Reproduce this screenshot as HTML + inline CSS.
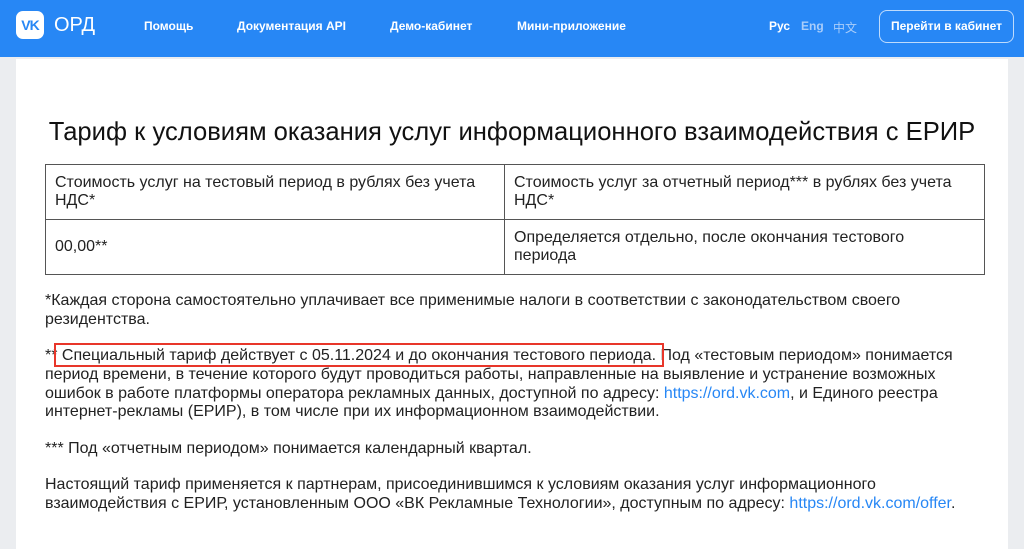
<!DOCTYPE html>
<html><head><meta charset="utf-8"><style>
*{margin:0;padding:0;box-sizing:border-box}
body{width:1024px;height:541px;overflow:hidden;background:#ebedf0;font-family:"Liberation Sans","Noto Sans CJK SC",sans-serif;color:#222}
.hdr{height:57px;background:#2787f5;position:relative;color:#fff}
.logo{position:absolute;left:16px;top:11px;width:28px;height:28px;background:#fff;border-radius:7px;color:#2787f5;font-weight:bold;font-size:14px;text-align:center;line-height:28px;letter-spacing:-1px}
.ord{position:absolute;left:54px;top:14px;font-size:20px}
.nav{position:absolute;top:19px;font-size:12px;font-weight:bold}
.lang{position:absolute;top:19px;font-size:12px;font-weight:bold}
.btn{position:absolute;left:879px;top:10px;width:135px;height:33px;border:1px solid rgba(255,255,255,.7);border-radius:8px;font-size:12px;font-weight:bold;text-align:center;line-height:31px}
.card{position:absolute;left:16px;top:59px;width:992px;height:490px;background:#fff}
h1{position:absolute;left:0;width:1024px;top:118px;text-align:center;font-size:25.6px;font-weight:normal;color:#111;white-space:nowrap}
table{position:absolute;left:45px;top:164px;width:940px;border-collapse:collapse;font-size:16px;table-layout:fixed}
td{border:1px solid #555;padding:0 9px;vertical-align:middle;line-height:18px;white-space:nowrap}
.p{position:absolute;left:45px;width:960px;font-size:16px;line-height:18.8px;color:#222;white-space:nowrap}
a{color:#2787f5;text-decoration:none}
.box{position:absolute;left:54px;top:343px;width:610px;height:24px;border:2px solid #e8362a}
</style></head><body>
<div class="hdr">
<div class="logo">VK</div><div class="ord">ОРД</div>
<div class="nav" style="left:144px">Помощь</div>
<div class="nav" style="left:237px">Документация API</div>
<div class="nav" style="left:390px">Демо-кабинет</div>
<div class="nav" style="left:517px">Мини-приложение</div>
<div class="lang" style="left:769px">Рус</div>
<div class="lang" style="left:801px;color:#a9cdfa">Eng</div>
<div class="lang" style="left:833px;color:#a9cdfa;font-weight:normal">中文</div>
<div class="btn">Перейти в кабинет</div>
</div>
<div class="card"></div>
<h1>Тариф к условиям оказания услуг информационного взаимодействия с ЕРИР</h1>
<table>
<colgroup><col style="width:459px"><col></colgroup>
<tr style="height:55px"><td>Стоимость услуг на тестовый период в рублях без учета<br>НДС*</td><td>Стоимость услуг за отчетный период*** в рублях без учета<br>НДС*</td></tr>
<tr style="height:55px"><td>00,00**</td><td>Определяется отдельно, после окончания тестового<br>периода</td></tr>
</table>
<div class="p" style="top:292px">*Каждая сторона самостоятельно уплачивает все применимые налоги в соответствии с законодательством своего<br>резидентства.</div>
<div class="p" style="top:347px">** Специальный тариф действует с 05.11.2024 и до окончания тестового периода. Под «тестовым периодом» понимается<br>период времени, в течение которого будут проводиться работы, направленные на выявление и устранение возможных<br>ошибок в работе платформы оператора рекламных данных, доступной по адресу: <a>https://ord.vk.com</a>, и Единого реестра<br>интернет-рекламы (ЕРИР), в том числе при их информационном взаимодействии.</div>
<div class="box"></div>
<div class="p" style="top:440px">*** Под «отчетным периодом» понимается календарный квартал.</div>
<div class="p" style="top:476px">Настоящий тариф применяется к партнерам, присоединившимся к условиям оказания услуг информационного<br>взаимодействия с ЕРИР, установленным ООО «ВК Рекламные Технологии», доступным по адресу: <a>https://ord.vk.com/offer</a>.</div>
</body></html>
